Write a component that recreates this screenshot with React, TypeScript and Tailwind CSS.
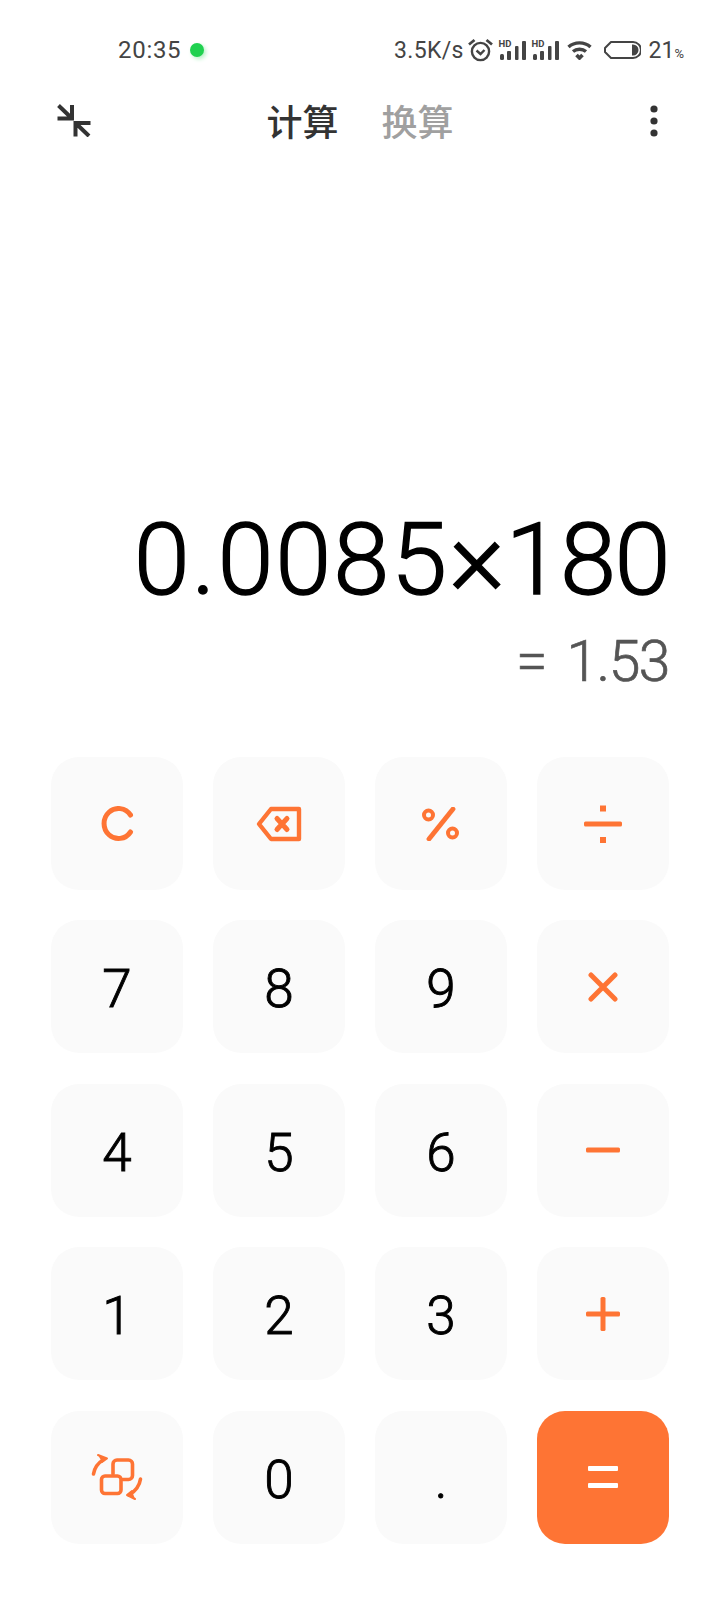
import type { ReactNode } from "react";

const ORANGE = "#fe7434";

function CollapseIcon() {
  return (
    <svg width="34" height="34" viewBox="0 0 34 34" fill="none" stroke="#333" strokeWidth="4">
      <path d="M1.5 2.5 L15 15.5 M15 2 V15.5 H0.5" />
      <path d="M32 33 L18.5 20 M18.5 33.5 V20 H33.5" />
    </svg>
  );
}

function MoreIcon() {
  return (
    <svg width="10" height="32" viewBox="0 0 10 32" fill="#333">
      <circle cx="5" cy="4" r="3.6" />
      <circle cx="5" cy="16" r="3.6" />
      <circle cx="5" cy="28" r="3.6" />
    </svg>
  );
}

function AlarmIcon() {
  return (
    <svg width="25" height="24" viewBox="0 0 25 24" fill="none" stroke="#444" strokeWidth="2.4">
      <circle cx="12.5" cy="13.5" r="8.6" />
      <path d="M8.5 12.5 L12.5 16 L16.5 12" />
      <path d="M1 6.5 L6.5 2 M24 6.5 L18.5 2" strokeWidth="2.8" />
    </svg>
  );
}

function SignalIcon() {
  return (
    <div className="relative w-[28px] h-[20px]">
      <span className="absolute left-0 top-[-1px] text-[9.5px] leading-[10px] font-bold text-[#444]">HD</span>
      <svg className="absolute left-0 top-0" width="28" height="20" viewBox="0 0 28 20" fill="#444">
        <rect x="1" y="14" width="4" height="6" rx="1.5" />
        <rect x="8" y="11" width="4" height="9" rx="1" />
        <rect x="16" y="6" width="3.5" height="14" rx="1" />
        <rect x="23" y="1" width="4" height="19" rx="1" />
      </svg>
    </div>
  );
}

function WifiIcon() {
  return (
    <svg width="25" height="20" viewBox="0 0 25 20" fill="none" stroke="#444" strokeWidth="3.4">
      <path d="M1.5 7 C7.5 1.5 17.5 1.5 23.5 7" />
      <path d="M6 11.5 C9.5 8.5 15.5 8.5 19 11.5" />
      <path d="M9.5 15 L12.5 18 L15.5 15" strokeWidth="3.6" />
    </svg>
  );
}

function BatteryIcon() {
  return (
    <svg width="38" height="20" viewBox="0 0 38 20" fill="none">
      <path
        d="M8 2 H30 A8 8 0 0 1 30 18 H8 L2 12 V8 Z"
        stroke="#444"
        strokeWidth="2"
        strokeLinejoin="round"
      />
      <path d="M29 4.5 H30 A5.5 5.5 0 0 1 30 15.5 H29 Z" fill="#444" />
    </svg>
  );
}

function BackspaceIcon() {
  return (
    <svg width="46" height="36" viewBox="0 0 46 36" fill="none" stroke={ORANGE} strokeWidth="4.4" strokeLinejoin="round">
      <path d="M15 3 H43 V33 H15 L3 18 Z" />
      <path d="M21 12.5 L31 23.5 M31 12.5 L21 23.5" strokeLinecap="round" strokeWidth="5" />
    </svg>
  );
}

function PercentIcon() {
  return (
    <svg width="38" height="34" viewBox="0 0 38 34" fill="none" stroke={ORANGE}>
      <circle cx="6.5" cy="8" r="4.5" strokeWidth="4" />
      <circle cx="30.5" cy="26" r="4.5" strokeWidth="4" />
      <path d="M31 2 L7 32" strokeWidth="4.8" strokeLinecap="round" />
    </svg>
  );
}

function DivideIcon() {
  return (
    <svg width="38" height="40" viewBox="0 0 38 40" fill={ORANGE}>
      <rect x="0" y="17.5" width="38" height="5" rx="1.5" />
      <rect x="16" y="1.5" width="6" height="6" />
      <rect x="16" y="33" width="6" height="6" />
    </svg>
  );
}

function TimesIcon() {
  return (
    <svg width="30" height="30" viewBox="0 0 30 30" fill="none" stroke={ORANGE} strokeWidth="5" strokeLinecap="round">
      <path d="M3 3 L27 27 M27 3 L3 27" />
    </svg>
  );
}

function MinusIcon() {
  return (
    <svg width="34" height="6" viewBox="0 0 34 6" fill={ORANGE}>
      <rect width="34" height="5" y="0.5" rx="1.5" />
    </svg>
  );
}

function PlusIcon() {
  return (
    <svg width="34" height="34" viewBox="0 0 34 34" fill={ORANGE}>
      <rect y="14.5" width="34" height="5" rx="1.5" />
      <rect x="14.5" width="5" height="34" rx="1.5" />
    </svg>
  );
}

function SwapIcon() {
  return (
    <svg width="52" height="48" viewBox="0 0 52 48" fill="none" stroke={ORANGE} strokeWidth="3.6" strokeLinecap="round" strokeLinejoin="round">
      <path d="M22 21 V11 A4 4 0 0 1 26 7 H37.5 A4 4 0 0 1 41.5 11 V22.5 A4 4 0 0 1 37.5 26.5 H32" />
      <rect x="10.5" y="23" width="19.5" height="17.5" rx="3.5" />
      <path d="M2.5 21 C3.5 15 7 10 12 7" />
      <path d="M7 2 L16 5.5 L11 9" fill={ORANGE} strokeWidth="2" />
      <path d="M49.5 26 C48.5 33 44 38.5 38 42" />
      <path d="M44 46 L36 42 L41 38" fill={ORANGE} strokeWidth="2" />
    </svg>
  );
}

function EqualsIcon() {
  return (
    <svg width="30" height="22" viewBox="0 0 30 22" fill="#fff">
      <rect width="30" height="5" y="0" rx="1" />
      <rect width="30" height="5" y="17" rx="1" />
    </svg>
  );
}

function Key({ children, accent, digit }: { children: ReactNode; accent?: boolean; digit?: boolean }) {
  if (accent) {
    return (
      <div className="h-[133px] rounded-[28px] bg-[#fe7434] flex items-center justify-center">
        {children}
      </div>
    );
  }
  return (
    <div
      className={
        digit
          ? "h-[133px] pt-[6px] rounded-[28px] bg-[#fafafa] flex items-center justify-center text-[53px] leading-none text-black font-light [-webkit-text-stroke:0.9px_black]"
          : "h-[133px] rounded-[28px] bg-[#fafafa] flex items-center justify-center"
      }
    >
      {children}
    </div>
  );
}

export default function App() {
  return (
    <div className="w-[720px] h-[1600px] bg-white flex flex-col font-['Roboto',sans-serif] overflow-hidden">
      {/* status bar */}
      <div className="h-[34px] mt-[33px] flex items-center pl-[118px] pr-[36px] text-[#444]">
        <span className="text-[24px] leading-none tracking-[0.7px]">20:35</span>
        <span className="ml-[9px] w-[14px] h-[14px] rounded-full bg-[#1fd14f] shadow-[2px_2px_4px_#b5f0c5]" />
        <div className="ml-auto flex items-center">
          <span className="text-[23px] leading-none tracking-[0.3px]">3.5K/s</span>
          <div className="ml-[4px]"><AlarmIcon /></div>
          <div className="ml-[6px]"><SignalIcon /></div>
          <div className="ml-[5px]"><SignalIcon /></div>
          <div className="ml-[7px]"><WifiIcon /></div>
          <div className="ml-[11px]"><BatteryIcon /></div>
          <span className="ml-[8px] text-[23px] leading-none">21</span>
          <span className="text-[13px] leading-none mt-[6px]">%</span>
        </div>
      </div>

      {/* top tabs */}
      <div className="relative h-[60px] mt-[23px] flex items-center justify-center">
        <div className="absolute left-[57px] top-[13px]"><CollapseIcon /></div>
        <div className="flex gap-[43px] text-[36px] leading-none font-medium font-['Noto_Sans_CJK_SC',sans-serif]">
          <span className="text-[#333]">计算</span>
          <span className="text-[#a0a0a0]">换算</span>
        </div>
        <div className="absolute left-[649px] top-[15px]"><MoreIcon /></div>
      </div>

      {/* expression and result */}
      <div className="pr-[51px] mt-[351px] text-right">
        <div className="text-[101px] leading-[118px] text-black font-light [-webkit-text-stroke:1.4px_black]">
          <span className="tracking-[1.8px]">0.0085</span>
          <span className="text-[108px] leading-none">×</span>
          <span className="tracking-[-1.5px]">180</span>
        </div>
        <div className="mt-[10px] text-[57px] leading-[66px] text-[#555] font-light tracking-[-1.5px] [word-spacing:8px] [-webkit-text-stroke:0.7px_#555]">
          = 1.53
        </div>
      </div>

      {/* keypad */}
      <div className="mt-[62px] px-[51px] grid grid-cols-4 gap-x-[30px] gap-y-[30.4px]">
        <Key>
          <svg width="34" height="36" viewBox="0 0 34 36" fill="none" stroke={ORANGE} strokeWidth="5" strokeLinecap="round">
            <path d="M30.5 9 A14.5 15 0 1 0 30.5 26" />
          </svg>
        </Key>
        <Key><BackspaceIcon /></Key>
        <Key><PercentIcon /></Key>
        <Key><DivideIcon /></Key>
        <Key digit>7</Key>
        <Key digit>8</Key>
        <Key digit>9</Key>
        <Key><TimesIcon /></Key>
        <Key digit>4</Key>
        <Key digit>5</Key>
        <Key digit>6</Key>
        <Key><MinusIcon /></Key>
        <Key digit>1</Key>
        <Key digit>2</Key>
        <Key digit>3</Key>
        <Key><PlusIcon /></Key>
        <Key><SwapIcon /></Key>
        <Key digit>0</Key>
        <Key digit>.</Key>
        <Key accent><EqualsIcon /></Key>
      </div>
    </div>
  );
}
